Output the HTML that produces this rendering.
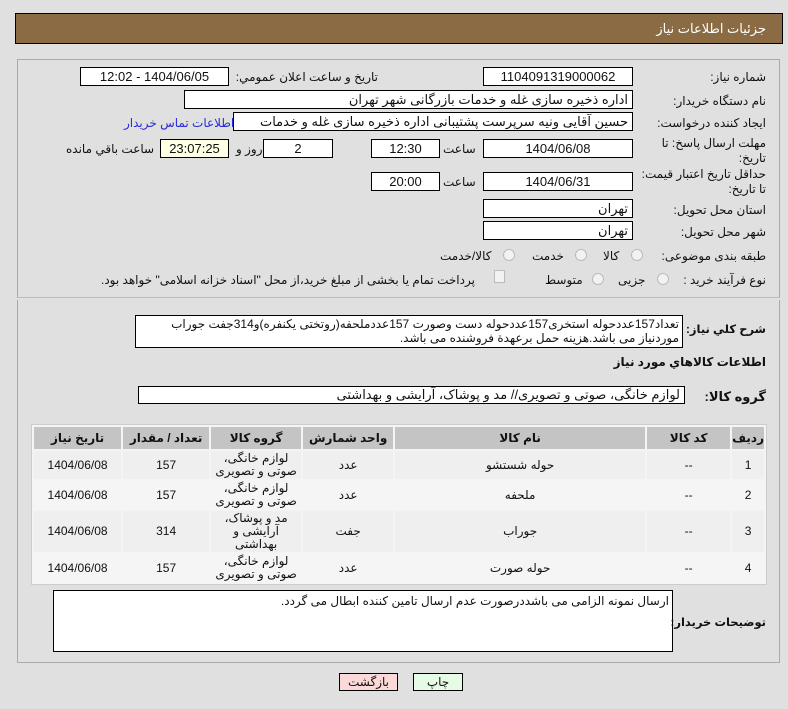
<!DOCTYPE html>
<html><head><meta charset="utf-8">
<style>
*{margin:0;padding:0;box-sizing:border-box}
body{width:788px;height:709px;background:#e0e0e0;font-family:"Liberation Sans","DejaVu Sans",sans-serif;font-size:12px;color:#111;position:relative;overflow:hidden;direction:rtl}
.a{position:absolute;white-space:nowrap}
.box{position:absolute;background:#fff;border:1px solid #000;height:19px;line-height:17px;text-align:center;font-size:13px}
.r{text-align:right;padding-right:4px}
.lbl{position:absolute;white-space:nowrap;font-size:12px;text-align:right;z-index:2}
.b{font-weight:bold;letter-spacing:-0.3px}
.radio{position:absolute;width:12px;height:12px;border-radius:50%;border:1px solid #bbb;background:#f2f2f2}
table{position:absolute;left:31px;top:424px;width:736px;border-collapse:separate;border-spacing:2px;background:#f4f4f4;border:1px solid #ccc}
td,th{text-align:center;font-size:12px}
th{background:#c4c4c4;height:22px;font-weight:bold}
td{background:#efefef;line-height:13px}
tr.o td{background:#f5f5f5}
</style></head><body>
<div class="a" style="left:15px;top:13px;width:768px;height:31px;background:#8b6b43;border:1px solid #000"></div>
<div class="a" style="right:22px;top:21px;color:#fff;font-size:13px">جزئیات اطلاعات نیاز</div>

<div class="a" style="left:17px;top:59px;width:763px;height:239px;border:1px solid #aaa;border-bottom-color:#bbb"></div>
<div class="a" style="left:17px;top:300px;width:763px;height:363px;border:1px solid #aaa;border-top:none"></div>

<div class="lbl" style="right:22px;top:70px">شماره نیاز:</div>
<div class="box" style="left:483px;top:67px;width:150px">1104091319000062</div>
<div class="lbl" style="right:410px;top:70px">تاریخ و ساعت اعلان عمومي:</div>
<div class="box" style="left:80px;top:67px;width:149px">1404/06/05 - 12:02</div>

<div class="lbl" style="right:22px;top:94px">نام دستگاه خریدار:</div>
<div class="box r" style="left:184px;top:90px;width:449px">اداره ذخیره سازی غله و خدمات بازرگانی شهر تهران</div>

<div class="lbl" style="right:22px;top:116px">ایجاد کننده درخواست:</div>
<div class="box r" style="left:233px;top:112px;width:400px;overflow:hidden">حسین آقایی ونیه سرپرست پشتیبانی اداره ذخیره سازی غله و خدمات بازرگانی</div>
<div class="lbl" style="left:124px;top:116px;color:#2a2ad8">اطلاعات تماس خریدار</div>

<div class="lbl" style="right:22px;top:136px;line-height:15px">مهلت ارسال پاسخ: تا<br>تاریخ:</div>
<div class="box" style="left:483px;top:139px;width:150px">1404/06/08</div>
<div class="lbl" style="left:443px;top:142px">ساعت</div>
<div class="box" style="left:371px;top:139px;width:69px">12:30</div>
<div class="box" style="left:263px;top:139px;width:70px">2</div>
<div class="lbl" style="left:236px;top:142px">روز و</div>
<div class="box" style="left:160px;top:139px;width:69px;background:#ffffe6">23:07:25</div>
<div class="lbl" style="left:66px;top:142px">ساعت باقي مانده</div>

<div class="lbl" style="right:22px;top:167px;line-height:15px">حداقل تاریخ اعتبار قیمت:<br>تا تاریخ:</div>
<div class="box" style="left:483px;top:172px;width:150px">1404/06/31</div>
<div class="lbl" style="left:443px;top:175px">ساعت</div>
<div class="box" style="left:371px;top:172px;width:69px">20:00</div>

<div class="lbl" style="right:22px;top:203px">استان محل تحویل:</div>
<div class="box r" style="left:483px;top:199px;width:150px">تهران</div>
<div class="lbl" style="right:22px;top:225px">شهر محل تحویل:</div>
<div class="box r" style="left:483px;top:221px;width:150px">تهران</div>

<div class="lbl" style="right:22px;top:249px">طبقه بندی موضوعی:</div>
<div class="radio" style="left:631px;top:249px"></div><div class="lbl" style="left:603px;top:249px">کالا</div>
<div class="radio" style="left:575px;top:249px"></div><div class="lbl" style="left:532px;top:249px">خدمت</div>
<div class="radio" style="left:503px;top:249px"></div><div class="lbl" style="left:440px;top:249px">کالا/خدمت</div>

<div class="lbl" style="right:22px;top:273px">نوع فرآیند خرید :</div>
<div class="radio" style="left:657px;top:273px"></div><div class="lbl" style="left:618px;top:273px">جزیی</div>
<div class="radio" style="left:592px;top:273px"></div><div class="lbl" style="left:545px;top:273px">متوسط</div>
<div class="a" style="left:494px;top:270px;width:11px;height:13px;border:1px solid #bbb;background:#f2f2f2"></div>
<div class="lbl" style="left:101px;top:273px">پرداخت تمام یا بخشی از مبلغ خرید،از محل "اسناد خزانه اسلامی" خواهد بود.</div>

<div class="lbl b" style="right:22px;top:322px;font-size:11.5px">شرح کلي نیاز:</div>
<div class="a" style="left:135px;top:315px;width:548px;height:33px;background:#fff;border:1px solid #000;white-space:normal;text-align:right;padding:1px 3px;line-height:14px;font-size:12px">تعداد157عددحوله استخری157عددحوله دست وصورت 157عددملحفه(روتختی یکنفره)و314جفت جوراب موردنیاز می باشد.هزینه حمل برعهدة فروشنده می باشد.</div>

<div class="lbl b" style="right:22px;top:355px;font-size:12px">اطلاعات کالاهاي مورد نیاز</div>
<div class="lbl b" style="right:22px;top:389px;font-size:13px">گروه کالا:</div>
<div class="box r" style="left:138px;top:386px;width:547px;height:18px;line-height:16px">لوازم خانگی، صوتی و تصویری// مد و پوشاک، آرایشی و بهداشتی</div>

<table>
<tr><th style="width:27px">ردیف</th><th style="width:83px">کد کالا</th><th style="width:250px">نام کالا</th><th style="width:90px">واحد شمارش</th><th style="width:90px">گروه کالا</th><th style="width:86px">تعداد / مقدار</th><th>تاریخ نیاز</th></tr>
<tr style="height:28px"><td>1</td><td>--</td><td>حوله شستشو</td><td>عدد</td><td>لوازم خانگی،<br>صوتی و تصویری</td><td>157</td><td>1404/06/08</td></tr>
<tr class="o" style="height:28px"><td>2</td><td>--</td><td>ملحفه</td><td>عدد</td><td>لوازم خانگی،<br>صوتی و تصویری</td><td>157</td><td>1404/06/08</td></tr>
<tr style="height:41px"><td>3</td><td>--</td><td>جوراب</td><td>جفت</td><td>مد و پوشاک،<br>آرایشی و<br>بهداشتی</td><td>314</td><td>1404/06/08</td></tr>
<tr class="o" style="height:28px"><td>4</td><td>--</td><td>حوله صورت</td><td>عدد</td><td>لوازم خانگی،<br>صوتی و تصویری</td><td>157</td><td>1404/06/08</td></tr>
</table>

<div class="lbl b" style="right:22px;top:615px;font-size:11.5px">توضیحات خریدار:</div>
<div class="a" style="left:53px;top:590px;width:620px;height:62px;background:#fff;border:1px solid #000;text-align:right;padding:3px 3px">ارسال نمونه الزامی می باشددرصورت عدم ارسال تامین کننده ابطال می گردد.</div>

<div class="a" style="left:339px;top:673px;width:59px;height:18px;background:#fcd9d9;border:1px solid #000;text-align:center;line-height:16px">بازگشت</div>
<div class="a" style="left:413px;top:673px;width:50px;height:18px;background:#e6fbe6;border:1px solid #000;text-align:center;line-height:16px">چاپ</div>
</body></html>
